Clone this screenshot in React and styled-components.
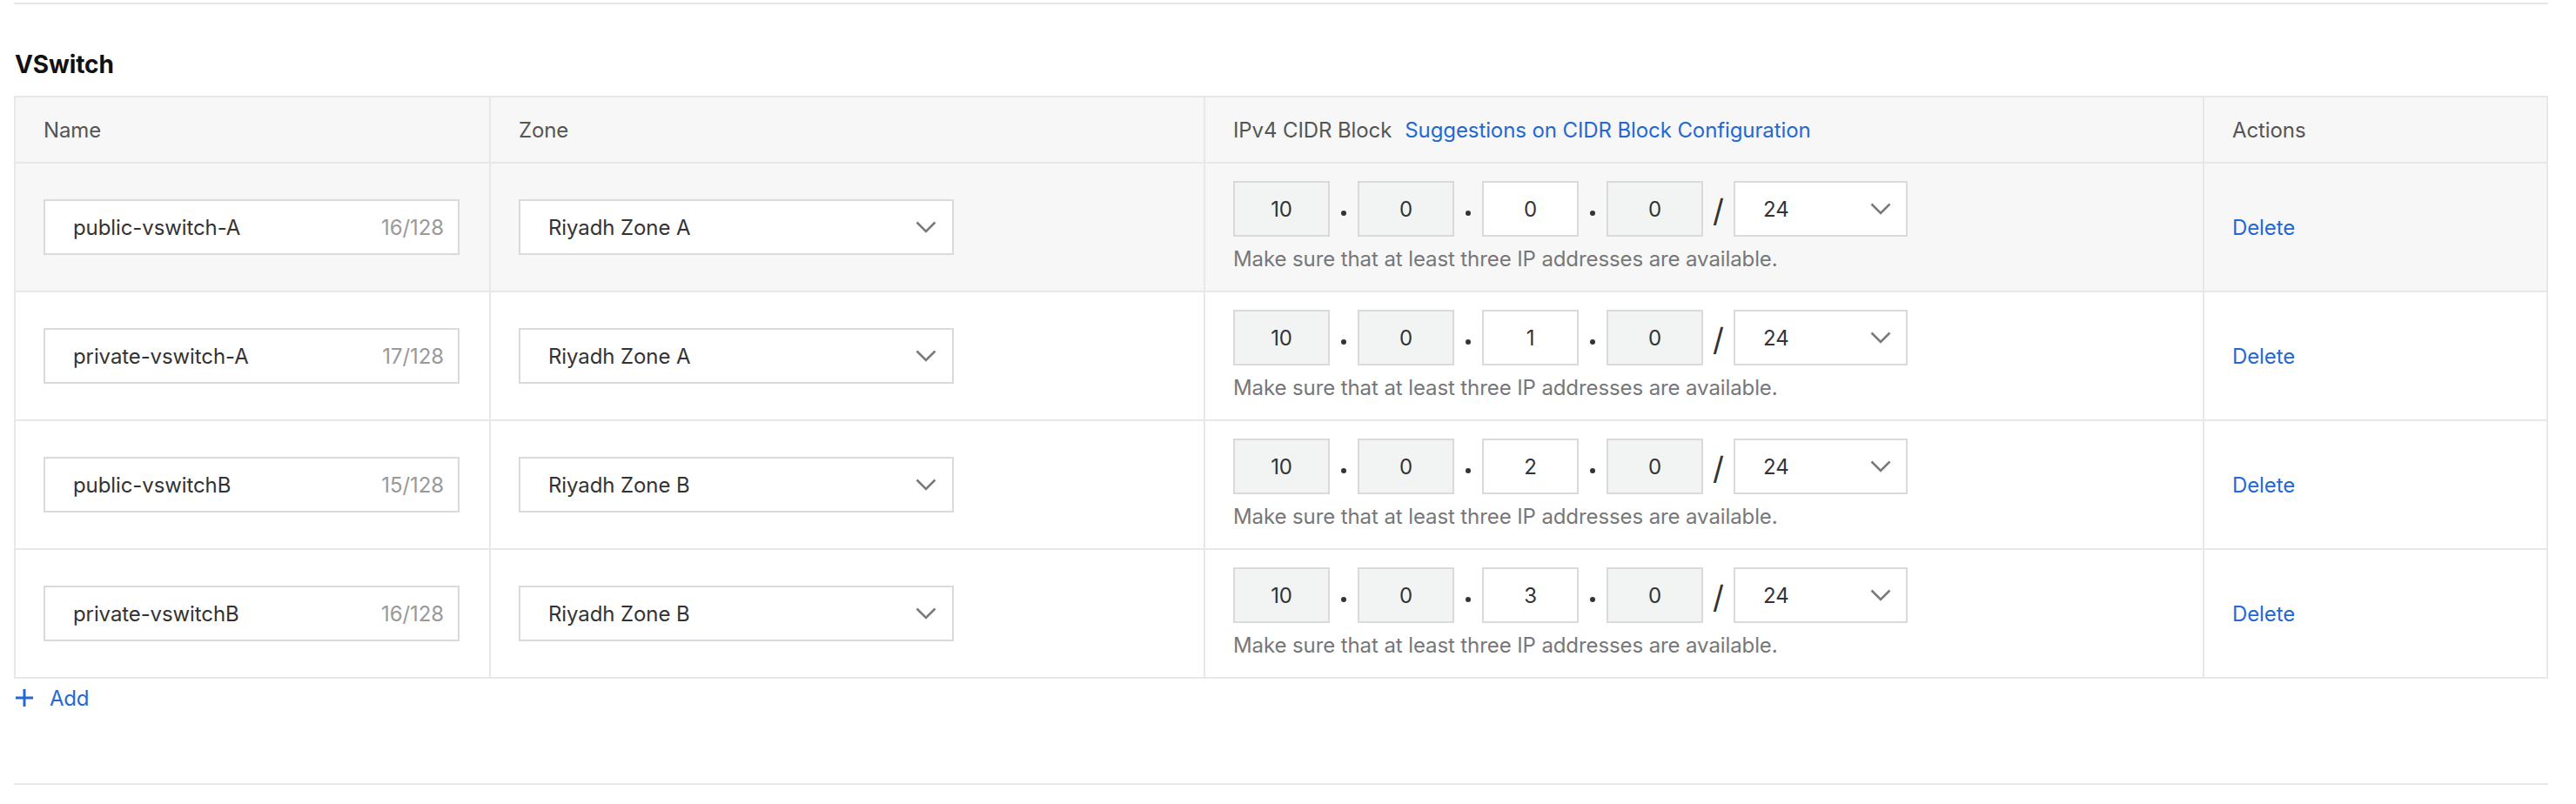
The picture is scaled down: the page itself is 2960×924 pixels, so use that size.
import React from "react";
import styled, { createGlobalStyle } from "styled-components";

const Global = createGlobalStyle`
  html, body { margin: 0; padding: 0; background: #ffffff; }
  body { font-family: Inter, Roboto, "Liberation Sans", Arial, sans-serif; color: #333; }
  * { box-sizing: border-box; }
`;

const BLUE = "#2468d2";
const LINE = "#e8e8e8";
const FIELD = "#dadada";

const Page = styled.div`
  padding: 3px 32px 0 16px;
  width: 2960px;
`;

const Divider = styled.div`
  height: 2px;
  background: ${LINE};
`;

const Title = styled.h2`
  margin: 49px 0 16px 1px;
  font-size: 28px;
  line-height: 40px;
  font-weight: 700;
  color: #111;
  letter-spacing: -0.1px;
`;

const Table = styled.table`
  width: 100%;
  border-collapse: collapse;
  table-layout: fixed;
  border: 2px solid ${LINE};
`;

const HeadCell = styled.th`
  height: 76px;
  padding: 0 32px;
  background: #f7f7f7;
  border: 2px solid ${LINE};
  text-align: left;
  font-weight: 400;
  font-size: 24px;
  color: #555;
  white-space: nowrap;
  letter-spacing: -0.1px;
`;

const Row = styled.tr`
  background: ${(p) => (p.$hover ? "#f7f7f7" : "#ffffff")};
`;

const Cell = styled.td`
  height: 148px;
  padding: 0 32px;
  border: 2px solid ${LINE};
  vertical-align: middle;
  font-size: 24px;
  letter-spacing: -0.1px;
`;

const HeadLink = styled.a`
  color: ${BLUE};
  margin-left: 15px;
  text-decoration: none;
`;

const InputBox = styled.div`
  display: flex;
  align-items: center;
  justify-content: space-between;
  width: ${(p) => p.$w}px;
  height: 64px;
  padding: 0 ${(p) => p.$pr || 16}px 0 32px;
  background: #fff;
  border: 2px solid ${FIELD};
  font-size: 24px;
  color: #333;
`;

const Counter = styled.span`
  color: #999;
`;

const Chevron = () => (
  <svg width="24" height="14" viewBox="0 0 24 14">
    <polyline points="1.5,1.5 12,12 22.5,1.5" fill="none" stroke="#7a7a7a" strokeWidth="2.6" />
  </svg>
);

const IpLine = styled.div`
  display: flex;
  align-items: center;
`;

const Octet = styled.div`
  width: 111px;
  height: 64px;
  display: flex;
  align-items: center;
  justify-content: center;
  border: 2px solid ${FIELD};
  background: ${(p) => (p.$disabled ? "#f2f3f3" : "#ffffff")};
  font-size: 24px;
  color: #333;
`;

const Dot = styled.span`
  width: 32px;
  display: flex;
  justify-content: center;
  padding-top: 9px;
  &::before {
    content: "";
    width: 6px;
    height: 6px;
    border-radius: 50%;
    background: #333;
  }
`;

const Slash = styled.span`
  width: 35px;
  text-align: center;
  font-size: 36px;
  line-height: 40px;
  color: #333;
  padding-top: 4px;
`;

const Help = styled.div`
  margin-top: 10px;
  font-size: 24px;
  line-height: 32px;
  color: #777;
`;

const ActionLink = styled.a`
  color: ${BLUE};
  font-size: 24px;
  text-decoration: none;
`;

const AddRow = styled.div`
  display: flex;
  align-items: center;
  gap: 18px;
  margin: 6px 0 82px 1px;
  height: 32px;
  color: ${BLUE};
  font-size: 24px;
  letter-spacing: -0.2px;
`;

const rows = [
  { name: "public-vswitch-A", count: "16/128", zone: "Riyadh Zone A", third: "0", hover: true },
  { name: "private-vswitch-A", count: "17/128", zone: "Riyadh Zone A", third: "1" },
  { name: "public-vswitchB", count: "15/128", zone: "Riyadh Zone B", third: "2" },
  { name: "private-vswitchB", count: "16/128", zone: "Riyadh Zone B", third: "3" },
];

export default function App() {
  return (
    <Page>
      <Global />
      <Divider />
      <Title>VSwitch</Title>
      <Table>
        <colgroup>
          <col style={{ width: 546 }} />
          <col style={{ width: 821 }} />
          <col style={{ width: 1148 }} />
          <col />
        </colgroup>
        <thead>
          <tr>
            <HeadCell>Name</HeadCell>
            <HeadCell>Zone</HeadCell>
            <HeadCell>
              IPv4 CIDR Block
              <HeadLink>Suggestions on CIDR Block Configuration</HeadLink>
            </HeadCell>
            <HeadCell>Actions</HeadCell>
          </tr>
        </thead>
        <tbody>
          {rows.map((r) => (
            <Row key={r.name} $hover={r.hover}>
              <Cell>
                <InputBox $w={478}>
                  <span>{r.name}</span>
                  <Counter>{r.count}</Counter>
                </InputBox>
              </Cell>
              <Cell>
                <InputBox $w={500} $pr={18}>
                  <span>{r.zone}</span>
                  <Chevron />
                </InputBox>
              </Cell>
              <Cell>
                <IpLine>
                  <Octet $disabled>10</Octet>
                  <Dot />
                  <Octet $disabled>0</Octet>
                  <Dot />
                  <Octet>{r.third}</Octet>
                  <Dot />
                  <Octet $disabled>0</Octet>
                  <Slash>/</Slash>
                  <InputBox $w={200} $pr={17}>
                    <span>24</span>
                    <Chevron />
                  </InputBox>
                </IpLine>
                <Help>Make sure that at least three IP addresses are available.</Help>
              </Cell>
              <Cell>
                <ActionLink>Delete</ActionLink>
              </Cell>
            </Row>
          ))}
        </tbody>
      </Table>
      <AddRow>
        <svg width="22" height="22" viewBox="0 0 22 22">
          <path d="M11 1v20M1 11h20" stroke={BLUE} strokeWidth="3" fill="none" />
        </svg>
        <span>Add</span>
      </AddRow>
      <Divider />
    </Page>
  );
}
